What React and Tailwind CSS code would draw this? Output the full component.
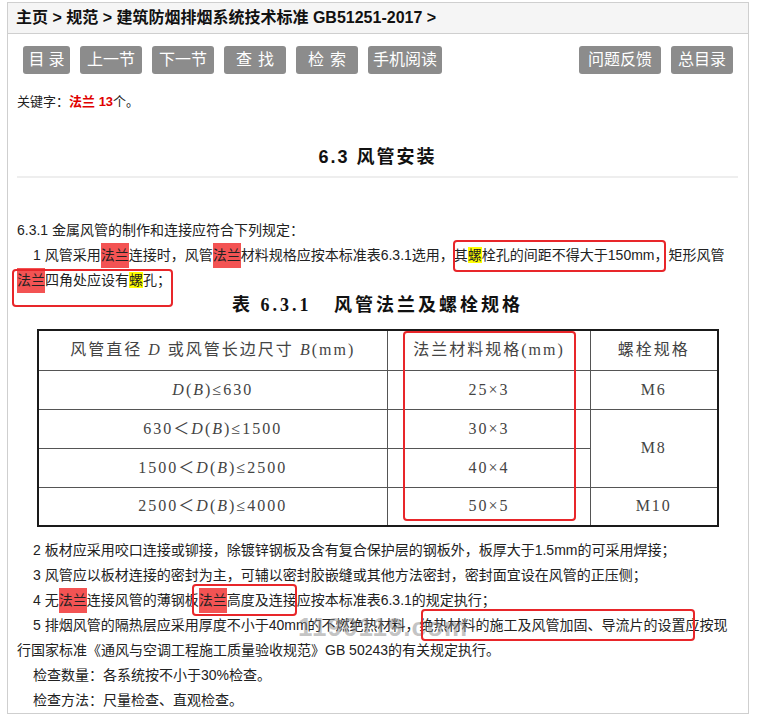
import React from "react";

const Red = ({ children }) => (
  <span className="inline-block indent-0 bg-[#f35353]">{children}</span>
);

const Yel = ({ children }) => <span className="bg-[#ffff00]">{children}</span>;

const Btn = ({ children, w, track = "" }) => (
  <div
    className={`${w} ${track} h-[28px] flex items-center justify-center rounded-[3px] bg-[#8c8c8c] text-white text-[16px]`}
  >
    {children}
  </div>
);

const Box = ({ cls }) => (
  <div className={`absolute ${cls} border-2 border-[#e8262a] rounded-[4px] pointer-events-none`} />
);

const App = () => {
  return (
    <div className="relative min-h-[715px] bg-white pt-[2px] text-[#222] font-['Liberation_Sans','Noto_Sans_CJK_SC',sans-serif]">
      <div className="ml-[7px] w-[742px] h-[712px] border border-[#cfcfcf] overflow-hidden">
        {/* breadcrumb */}
        <div className="h-[31px] bg-[#f5f5f5] border-b border-[#cfcfcf] flex items-center pl-[8px] text-[16px] font-bold text-[#111]">
          主页 &gt; 规范 &gt; 建筑防烟排烟系统技术标准 GB51251-2017 &gt;
        </div>

        {/* buttons */}
        <div className="flex justify-between px-[15px] pt-[12px]">
          <div className="flex gap-[10px]">
            <Btn w="w-[47px]" track="tracking-[4px] pl-[4px]">目录</Btn>
            <Btn w="w-[62px]">上一节</Btn>
            <Btn w="w-[62px]">下一节</Btn>
            <Btn w="w-[62px]" track="tracking-[6px] pl-[6px]">查找</Btn>
            <Btn w="w-[62px]" track="tracking-[6px] pl-[6px]">检索</Btn>
            <Btn w="w-[74px]">手机阅读</Btn>
          </div>
          <div className="flex gap-[10px]">
            <Btn w="w-[82px]">问题反馈</Btn>
            <Btn w="w-[62px]">总目录</Btn>
          </div>
        </div>

        <div className="pl-[9px] pr-[10px]">
          <div className="mt-[18px] text-[13px] leading-[20px]">
            关键字：<span className="text-[#e00000] font-bold">法兰 13</span>个。
          </div>

          <div className="mt-[32px] text-center text-[18px] leading-[26px] font-bold tracking-[2px] text-[#111]">
            6.3 风管安装
          </div>
          <div className="mt-[6px] h-[2px] bg-[#eeeeee]" />

          <div className="mt-[40px] text-[14px] leading-[25px] whitespace-nowrap">
            <div>6.3.1 金属风管的制作和连接应符合下列规定：</div>
            <div className="indent-4">
              1 风管采用<Red>法兰</Red>连接时，风管<Red>法兰</Red>材料规格应按本标准表6.3.1选用，其<Yel>螺</Yel>栓孔的间距不得大于150mm，矩形风管
            </div>
            <div>
              <Red>法兰</Red>四角处应设有<Yel>螺</Yel>孔；
            </div>
          </div>

          <div className="text-center text-[18px] leading-[24px] font-bold tracking-[3px] text-[#111] font-['Liberation_Serif','Noto_Sans_CJK_SC',serif]">
            表 6.3.1&nbsp;&nbsp;&nbsp;风管法兰及螺栓规格
          </div>

          <table className="mt-[12px] mx-auto w-[682px] border-collapse border-2 border-[#1a1a1a] text-[16px] text-[#444] tracking-[2px] font-['Liberation_Serif','Noto_Sans_CJK_SC',serif]">
            <tbody>
              <tr className="h-[40px]">
                <td className="w-[350px] border border-[#555] text-center">
                  风管直径 <i>D</i> 或风管长边尺寸 <i>B</i>(mm)
                </td>
                <td className="w-[203px] border border-[#555] text-center">法兰材料规格(mm)</td>
                <td className="border border-[#555] text-center">螺栓规格</td>
              </tr>
              <tr className="h-[39px]">
                <td className="border border-[#555] text-center">
                  <i>D</i>(<i>B</i>)≤630
                </td>
                <td className="border border-[#555] text-center">25×3</td>
                <td className="border border-[#555] text-center">M6</td>
              </tr>
              <tr className="h-[39px]">
                <td className="border border-[#555] text-center">
                  630＜<i>D</i>(<i>B</i>)≤1500
                </td>
                <td className="border border-[#555] text-center">30×3</td>
                <td rowSpan={2} className="border border-[#555] text-center">M8</td>
              </tr>
              <tr className="h-[39px]">
                <td className="border border-[#555] text-center">
                  1500＜<i>D</i>(<i>B</i>)≤2500
                </td>
                <td className="border border-[#555] text-center">40×4</td>
              </tr>
              <tr className="h-[39px]">
                <td className="border border-[#555] text-center">
                  2500＜<i>D</i>(<i>B</i>)≤4000
                </td>
                <td className="border border-[#555] text-center">50×5</td>
                <td className="border border-[#555] text-center">M10</td>
              </tr>
            </tbody>
          </table>

          <div className="mt-[11px] text-[14px] leading-[25px] whitespace-nowrap">
            <div className="indent-4">
              2 板材应采用咬口连接或铆接，除镀锌钢板及含有复合保护层的钢板外，板厚大于1.5mm的可采用焊接；
            </div>
            <div className="indent-4">
              3 风管应以板材连接的密封为主，可辅以密封胶嵌缝或其他方法密封，密封面宜设在风管的正压侧；
            </div>
            <div className="indent-4">
              4 无<Red>法兰</Red>连接风管的薄钢板<Red>法兰</Red>高度及连接应按本标准表6.3.1的规定执行；
            </div>
            <div className="indent-4">
              5 排烟风管的隔热层应采用厚度不小于40mm的不燃绝热材料，绝热材料的施工及风管加固、导流片的设置应按现
            </div>
            <div>行国家标准《通风与空调工程施工质量验收规范》GB 50243的有关规定执行。</div>
            <div className="indent-4">检查数量：各系统按不小于30%检查。</div>
            <div className="indent-4">检查方法：尺量检查、直观检查。</div>
          </div>
        </div>
      </div>

      {/* watermark */}
      <div className="absolute left-[298px] top-[608px] text-[26px] font-bold text-[#8a8a8a]/50 tracking-[1px] pointer-events-none">
        1190119.com
      </div>

      {/* annotation boxes */}
      <Box cls="left-[453px] top-[240px] w-[213px] h-[32px]" />
      <Box cls="left-[12px] top-[269px] w-[161px] h-[38px]" />
      <Box cls="left-[403px] top-[331px] w-[173px] h-[190px]" />
      <Box cls="left-[192px] top-[584px] w-[105px] h-[32px]" />
      <Box cls="left-[421px] top-[609px] w-[274px] h-[32px]" />
    </div>
  );
};

export default App;
